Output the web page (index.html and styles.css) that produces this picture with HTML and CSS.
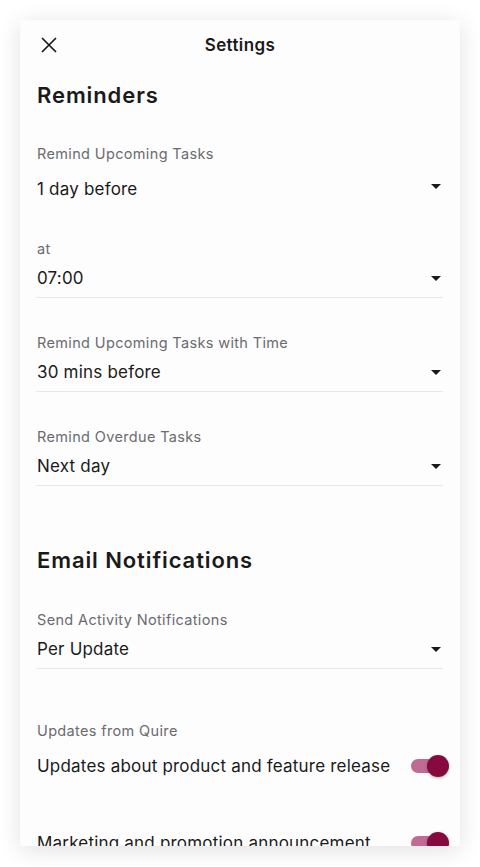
FILE: index.html
```html
<!DOCTYPE html>
<html lang="en">
<head>
    <meta charset="UTF-8">
    <meta name="viewport" content="width=device-width, initial-scale=1.0">
    <title>Settings</title>
    <link rel="stylesheet" href="styles.css">
</head>
<body>
    <div class="dialog">
        <div class="dialog-header">
            <button class="close-btn" aria-label="Close">
                <svg width="16" height="16" viewBox="0 0 16 16">
                    <path d="M1 1L15 15M15 1L1 15" stroke="#1a1a1a" stroke-width="1.7" fill="none"/>
                </svg>
            </button>
            <div class="dialog-title">Settings</div>
        </div>

        <div class="dialog-body">
            <h2 class="section-title">Reminders</h2>

            <div class="field">
                <div class="field-label">Remind Upcoming Tasks</div>
                <div class="select select-plain">
                    <span>1 day before</span>
                    <span class="arrow"></span>
                </div>
            </div>

            <div class="field">
                <div class="field-label">at</div>
                <div class="select">
                    <span>07:00</span>
                    <span class="arrow"></span>
                </div>
            </div>

            <div class="field">
                <div class="field-label">Remind Upcoming Tasks with Time</div>
                <div class="select">
                    <span>30 mins before</span>
                    <span class="arrow"></span>
                </div>
            </div>

            <div class="field">
                <div class="field-label">Remind Overdue Tasks</div>
                <div class="select">
                    <span>Next day</span>
                    <span class="arrow"></span>
                </div>
            </div>

            <h2 class="section-title section-gap">Email Notifications</h2>

            <div class="field">
                <div class="field-label">Send Activity Notifications</div>
                <div class="select">
                    <span>Per Update</span>
                    <span class="arrow"></span>
                </div>
            </div>

            <div class="toggle-group">
                <div class="field-label">Updates from Quire</div>
                <div class="toggle-row">
                    <span>Updates about product and feature release</span>
                    <span class="toggle on"><span class="thumb"></span></span>
                </div>
                <div class="toggle-row">
                    <span>Marketing and promotion announcement</span>
                    <span class="toggle on"><span class="thumb"></span></span>
                </div>
            </div>
        </div>
    </div>
</body>
</html>
```

FILE: styles.css
```css
body {
    margin: 0;
    background-color: #ffffff;
    font-family: Inter, "Noto Sans", sans-serif;
    color: #1a1a1a;
}

.dialog {
    margin: 20px;
    width: 440px;
    height: 826px;
    background-color: #fdfdfd;
    box-shadow: 0 4px 22px rgba(0, 0, 0, 0.12);
    overflow: hidden;
}

.dialog-header {
    position: relative;
    height: 50px;
    display: flex;
    align-items: center;
    justify-content: center;
}

.close-btn {
    position: absolute;
    left: 21px;
    top: 17px;
    width: 16px;
    height: 16px;
    padding: 0;
    border: none;
    background: none;
    display: flex;
}

.dialog-title {
    font-size: 17px;
    font-weight: 600;
    letter-spacing: 0.4px;
}

.dialog-body {
    padding: 0 17px 0 16px;
}

.section-title {
    margin: 10px 0 34px;
    font-size: 22px;
    line-height: 30px;
    font-weight: 600;
    letter-spacing: 0.9px;
    padding-left: 1px;
}

.section-gap {
    margin-top: 59px;
    margin-bottom: 35px;
}

.field {
    margin-bottom: 35px;
}

.field-label {
    font-size: 14.5px;
    line-height: 20px;
    color: #6b6b70;
    padding-left: 1px;
    letter-spacing: 0.35px;
}

.select {
    display: flex;
    align-items: center;
    justify-content: space-between;
    padding: 7px 0 7px 1px;
    font-size: 17px;
    line-height: 24px;
    letter-spacing: 0.2px;
    border-bottom: 1px solid #e8e8e8;
}

.select-plain {
    padding: 13px 0 2px 1px;
    border-bottom-color: transparent;
}

.select-plain .arrow {
    margin-top: -6px;
}

.arrow {
    width: 0;
    height: 0;
    margin-right: 2px;
    border-left: 5px solid transparent;
    border-right: 5px solid transparent;
    border-top: 5px solid #1a1a1a;
}

.toggle-group {
    margin-top: 52px;
}

.toggle-row {
    display: flex;
    align-items: center;
    justify-content: space-between;
    height: 50px;
    margin-bottom: 27px;
    font-size: 17px;
    letter-spacing: 0.2px;
    padding-left: 1px;
}

.toggle {
    position: relative;
    flex: none;
    width: 34px;
    height: 14px;
    margin-right: -2px;
    border-radius: 7px;
    background-color: #c06b93;
}

.toggle .thumb {
    position: absolute;
    top: -4px;
    right: -4px;
    width: 22px;
    height: 22px;
    border-radius: 50%;
    background-color: #870a3f;
    box-shadow: 0 1px 3px rgba(0, 0, 0, 0.3);
}
```
